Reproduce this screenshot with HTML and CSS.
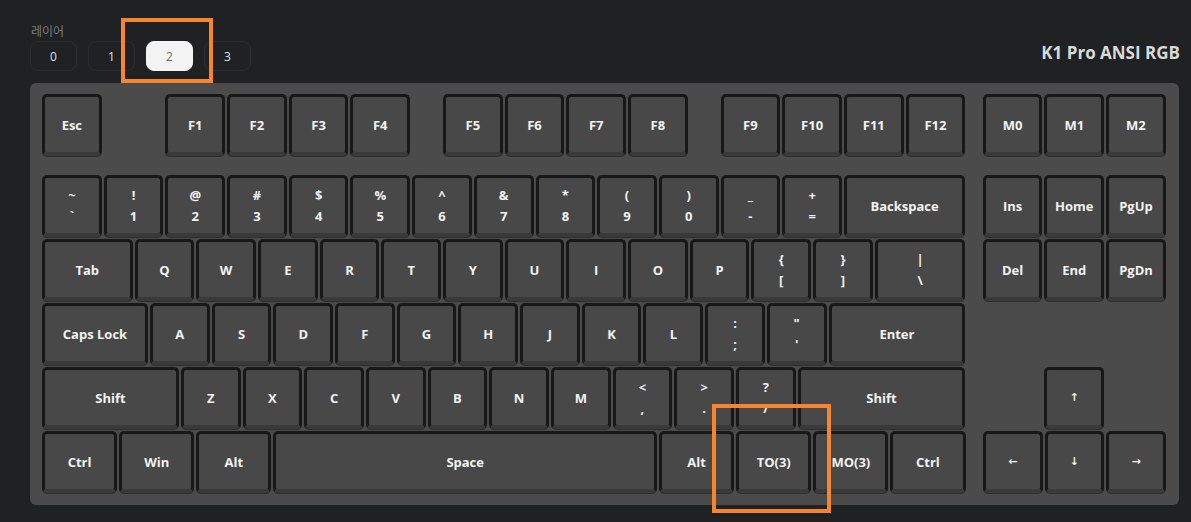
FILE: index.html
```html
<!DOCTYPE html>
<html lang="ko">
<head>
<meta charset="utf-8">
<title>Keymap</title>
<link rel="stylesheet" href="styles.css">
</head>
<body>
<div class="page">
  <div class="header">
    <div class="layers">
      <div class="layer-label">레이어</div>
      <div class="tabs">
        <div class="tab">0</div>
        <div class="tab">1</div>
        <div class="tab active">2</div>
        <div class="tab">3</div>
      </div>
    </div>
    <div class="title">K1 Pro ANSI RGB</div>
  </div>

  <div class="keyboard">
    <div class="row frow">
      <div class="key">Esc</div>
      <div class="sp w1"></div>
      <div class="key">F1</div><div class="key">F2</div><div class="key">F3</div><div class="key">F4</div>
      <div class="sp w05"></div>
      <div class="key">F5</div><div class="key">F6</div><div class="key">F7</div><div class="key">F8</div>
      <div class="sp w05"></div>
      <div class="key">F9</div><div class="key">F10</div><div class="key">F11</div><div class="key">F12</div>
      <div class="sp w025"></div>
      <div class="key">M0</div><div class="key">M1</div><div class="key">M2</div>
    </div>

    <div class="row">
      <div class="key dbl"><span>~</span><span>`</span></div>
      <div class="key dbl"><span>!</span><span>1</span></div>
      <div class="key dbl"><span>@</span><span>2</span></div>
      <div class="key dbl"><span>#</span><span>3</span></div>
      <div class="key dbl"><span>$</span><span>4</span></div>
      <div class="key dbl"><span>%</span><span>5</span></div>
      <div class="key dbl"><span>^</span><span>6</span></div>
      <div class="key dbl"><span>&amp;</span><span>7</span></div>
      <div class="key dbl"><span>*</span><span>8</span></div>
      <div class="key dbl"><span>(</span><span>9</span></div>
      <div class="key dbl"><span>)</span><span>0</span></div>
      <div class="key dbl"><span>_</span><span>-</span></div>
      <div class="key dbl"><span>+</span><span>=</span></div>
      <div class="key w2">Backspace</div>
      <div class="sp w025"></div>
      <div class="key">Ins</div><div class="key">Home</div><div class="key">PgUp</div>
    </div>

    <div class="row">
      <div class="key w15">Tab</div>
      <div class="key">Q</div><div class="key">W</div><div class="key">E</div><div class="key">R</div><div class="key">T</div>
      <div class="key">Y</div><div class="key">U</div><div class="key">I</div><div class="key">O</div><div class="key">P</div>
      <div class="key dbl"><span>{</span><span>[</span></div>
      <div class="key dbl"><span>}</span><span>]</span></div>
      <div class="key dbl w15"><span>|</span><span>\</span></div>
      <div class="sp w025"></div>
      <div class="key">Del</div><div class="key">End</div><div class="key">PgDn</div>
    </div>

    <div class="row">
      <div class="key w175">Caps Lock</div>
      <div class="key">A</div><div class="key">S</div><div class="key">D</div><div class="key">F</div><div class="key">G</div>
      <div class="key">H</div><div class="key">J</div><div class="key">K</div><div class="key">L</div>
      <div class="key dbl"><span>:</span><span>;</span></div>
      <div class="key dbl"><span>"</span><span>'</span></div>
      <div class="key w225">Enter</div>
    </div>

    <div class="row">
      <div class="key w225">Shift</div>
      <div class="key">Z</div><div class="key">X</div><div class="key">C</div><div class="key">V</div>
      <div class="key">B</div><div class="key">N</div><div class="key">M</div>
      <div class="key dbl"><span>&lt;</span><span>,</span></div>
      <div class="key dbl"><span>&gt;</span><span>.</span></div>
      <div class="key dbl"><span>?</span><span>/</span></div>
      <div class="key w275">Shift</div>
      <div class="sp w125"></div>
      <div class="key arrow">↑</div>
    </div>

    <div class="row">
      <div class="key w125">Ctrl</div>
      <div class="key w125">Win</div>
      <div class="key w125">Alt</div>
      <div class="key w625">Space</div>
      <div class="key w125">Alt</div>
      <div class="key w125">TO(3)</div>
      <div class="key w125">MO(3)</div>
      <div class="key w125">Ctrl</div>
      <div class="sp w025"></div>
      <div class="key arrow">←</div><div class="key arrow">↓</div><div class="key arrow">→</div>
    </div>
  </div>
</div>

<div class="mark mark-tab"></div>
<div class="mark mark-key"></div>
</body>
</html>
```

FILE: styles.css
```css
html, body {
  margin: 0;
  padding: 0;
  background: #1f2123;
}

body {
  width: 1191px;
  height: 522px;
  overflow: hidden;
  position: relative;
  font-family: "Open Sans", "Noto Sans", "Noto Sans CJK KR", sans-serif;
}

.page {
  padding: 23px 12px 0 30px;
}

.header {
  display: flex;
  justify-content: space-between;
  align-items: flex-end;
}

.layer-label {
  font-family: "Noto Sans CJK KR", "Noto Sans", sans-serif;
  font-size: 12px;
  line-height: 16px;
  color: #7b7d80;
  margin-left: 1px;
  margin-bottom: 2px;
}

.tabs {
  display: flex;
  gap: 11px;
}

.tab {
  box-sizing: border-box;
  width: 47px;
  height: 30px;
  border: 1px solid #2a2c2f;
  border-radius: 8px;
  display: flex;
  align-items: center;
  justify-content: center;
  font-size: 12px;
  color: #dde1e6;
}

.tab.active {
  background: #f3f3f3;
  border-color: #f3f3f3;
  color: #6c6c6c;
}

.title {
  font-size: 17px;
  font-weight: 700;
  line-height: 22px;
  color: #d9d9d9;
  margin-bottom: 7px;
  margin-right: -1px;
}

.keyboard {
  --u: 61.7px;
  margin-top: 12px;
  background: #4b4b4b;
  border-radius: 6px;
  padding: 11px 0 12px 12px;
  display: flex;
  flex-direction: column;
  gap: 2px;
}

.row {
  display: flex;
  gap: 2px;
}

.row.frow {
  margin-bottom: 17px;
}

.key {
  box-sizing: border-box;
  width: calc(var(--u) - 2px);
  height: 62px;
  flex: none;
  background: #484848;
  border: 3px solid #181818;
  border-bottom: 4px solid #3a3a3a;
  border-radius: 5px;
  box-shadow: 0 1px 0 #2e2e2e;
  display: flex;
  align-items: center;
  justify-content: center;
  color: #f2f2f2;
  font-size: 13px;
  font-weight: 700;
  line-height: 14px;
  white-space: nowrap;
}

.key.dbl {
  flex-direction: column;
  gap: 7px;
}

.key.arrow {
  font-family: "DejaVu Sans", sans-serif;
  font-size: 11px;
  font-weight: 700;
  color: #f2f2f2;
}

.sp {
  flex: none;
  height: 1px;
}

.w025 { width: calc(0.25 * var(--u) - 2px); }
.w05  { width: calc(0.5 * var(--u) - 2px); }
.w1   { width: calc(1 * var(--u) - 2px); }
.w125 { width: calc(1.25 * var(--u) - 2px); }
.w15  { width: calc(1.5 * var(--u) - 2px); }
.w175 { width: calc(1.75 * var(--u) - 2px); }
.w2   { width: calc(2 * var(--u) - 2px); }
.w225 { width: calc(2.25 * var(--u) - 2px); }
.w275 { width: calc(2.75 * var(--u) - 2px); }
.w625 { width: calc(6.25 * var(--u) - 2px); }

.mark {
  position: absolute;
  box-sizing: border-box;
  border: 4px solid #f6852b;
  pointer-events: none;
}

.mark-tab {
  left: 121px;
  top: 18px;
  width: 92px;
  height: 65px;
}

.mark-key {
  left: 712px;
  top: 404px;
  width: 119px;
  height: 109px;
}
```
